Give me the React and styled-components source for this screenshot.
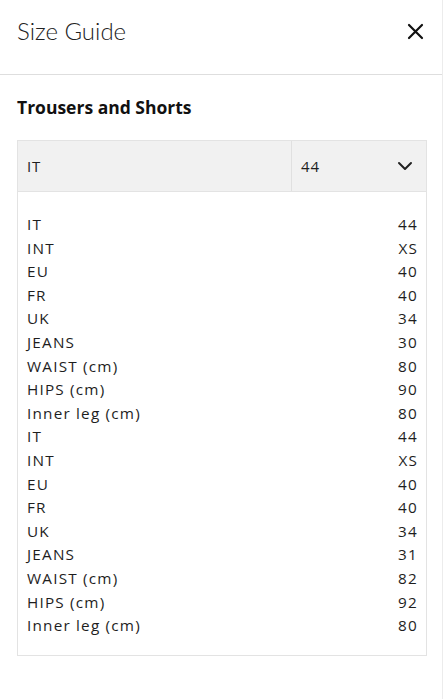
import styled, { createGlobalStyle } from "styled-components";

const GlobalStyle = createGlobalStyle`
    html, body {
        margin: 0;
        background: #fff;
    }
    * { box-sizing: border-box; }
`

const Panel = styled.div`
    width: 443px;
    min-height: 699px;
    border-right: 1px solid #ececec;
    background: #fff;
    font-family: "Open Sans", "Liberation Sans", sans-serif;
    color: #1e1e1e;
`
const Header = styled.header`
    height: 75px;
    display: flex;
    align-items: flex-start;
    justify-content: space-between;
    padding: 16px 17px 0 17px;
    border-bottom: 1px solid #dedede;
`
const Title = styled.h1`
    margin: 0;
    font-family: "Lato", "Liberation Sans", sans-serif;
    font-weight: 300;
    font-size: 24px;
    line-height: 30px;
    color: #222;
`
const CloseButton = styled.button`
    border: 0;
    background: none;
    padding: 0;
    margin-top: 5px;
    width: 20px;
    height: 20px;
    display: flex;
    align-items: center;
    justify-content: center;
    cursor: pointer;
`
const Content = styled.div`
    padding: 20px 15px 0 17px;
`
const Section = styled.h2`
    margin: 0 0 21px;
    font-size: 17.5px;
    font-weight: 700;
    line-height: 24px;
    color: #111;
`
const Table = styled.div`
    border: 1px solid #e3e3e3;
`
const SelectRow = styled.div`
    display: grid;
    grid-template-columns: 273px 1fr;
    height: 51px;
    background: #f1f1f1;
    border-bottom: 1px solid #e3e3e3;
`
const SelectCell = styled.div`
    display: flex;
    align-items: center;
    justify-content: space-between;
    padding: 0 13px 0 9px;
    font-size: 15px;
    letter-spacing: 0.8px;
    border-left: ${p => (p.$divider ? "1px solid #e0e0e0" : "none")};
`
const Rows = styled.div`
    padding: 21px 8px 17px 9px;
`
const Row = styled.div`
    display: flex;
    justify-content: space-between;
    font-size: 15.3px;
    line-height: 23.6px;
    letter-spacing: 1.2px;
    color: #1e1e1e;
`

const sizes = [
    ["IT", "44"], ["INT", "XS"], ["EU", "40"], ["FR", "40"], ["UK", "34"],
    ["JEANS", "30"], ["WAIST (cm)", "80"], ["HIPS (cm)", "90"], ["Inner leg (cm)", "80"],
    ["IT", "44"], ["INT", "XS"], ["EU", "40"], ["FR", "40"], ["UK", "34"],
    ["JEANS", "31"], ["WAIST (cm)", "82"], ["HIPS (cm)", "92"], ["Inner leg (cm)", "80"],
];

function App() {
    return (
        <Panel>
            <GlobalStyle />
            <Header>
                <Title>Size Guide</Title>
                <CloseButton aria-label="Close">
                    <svg width="17" height="17" viewBox="0 0 17 17">
                        <path d="M2 2 L15 15 M15 2 L2 15" stroke="#111" strokeWidth="2.2" strokeLinecap="round" />
                    </svg>
                </CloseButton>
            </Header>
            <Content>
                <Section>Trousers and Shorts</Section>
                <Table>
                    <SelectRow>
                        <SelectCell>IT</SelectCell>
                        <SelectCell $divider>
                            44
                            <svg width="16" height="10" viewBox="0 0 16 10">
                                <path d="M2 2 L8 8 L14 2" fill="none" stroke="#222" strokeWidth="2" strokeLinecap="round" strokeLinejoin="round" />
                            </svg>
                        </SelectCell>
                    </SelectRow>
                    <Rows>
                        {sizes.map(([label, value], i) => (
                            <Row key={i}>
                                <span>{label}</span>
                                <span>{value}</span>
                            </Row>
                        ))}
                    </Rows>
                </Table>
            </Content>
        </Panel>
    );
}

export default App;
